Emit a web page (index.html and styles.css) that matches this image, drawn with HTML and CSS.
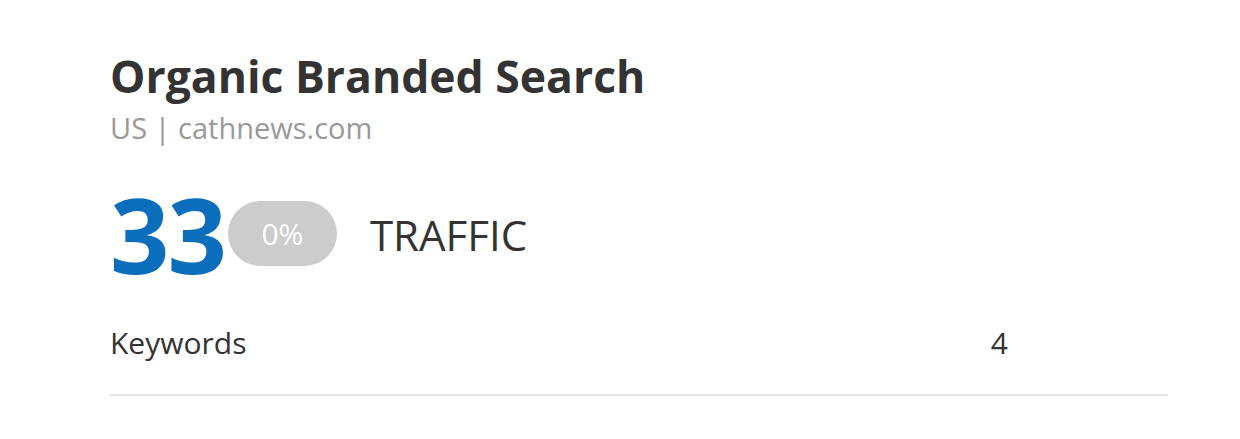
FILE: index.html
```html
<!DOCTYPE html>
<html lang="en">
<head>
  <meta charset="UTF-8" />
  <title>Organic Branded Search</title>
  <link rel="stylesheet" href="styles.css">
</head>
<body>
  <div class="widget">
    <h1 class="widget-title">Organic Branded Search</h1>
    <div class="widget-sub">US | cathnews.com</div>

    <div class="metric">
      <span class="metric-value">33</span>
      <span class="metric-badge">0%</span>
      <span class="metric-label">TRAFFIC</span>
    </div>

    <div class="stat-row">
      <span class="stat-name">Keywords</span>
      <span class="stat-value">4</span>
    </div>
  </div>
</body>
</html>
```

FILE: styles.css
```css
/* Reset */
* {
  box-sizing: border-box;
  margin: 0;
  padding: 0;
}

body {
  background-color: #fff;
  color: #333;
  font-family: 'Open Sans', 'Noto Sans', sans-serif;
}

.widget {
  padding: 48px 72px 0 110px;
}

.widget-title {
  font-size: 44.5px;
  font-weight: 700;
  color: #333;
  line-height: 56px;
}

.widget-sub {
  font-size: 29px;
  color: #999;
  line-height: 36px;
  margin-top: 6px;
}

/* Main metric */
.metric {
  display: flex;
  align-items: center;
  margin-top: 38px;
  height: 100px;
}

.metric-value {
  font-size: 104px;
  font-weight: 700;
  color: #0a6ebd;
  letter-spacing: -2px;
  line-height: 1;
}

.metric-badge {
  background-color: #ccc;
  color: #fff;
  font-size: 30px;
  width: 109px;
  height: 65px;
  border-radius: 33px;
  display: flex;
  align-items: center;
  justify-content: center;
  margin-left: 3px;
  margin-top: -2px;
}

.metric-label {
  font-size: 42px;
  color: #333;
  margin-left: 33px;
}

/* Rows */
.stat-row {
  display: flex;
  justify-content: space-between;
  align-items: center;
  font-size: 30px;
  line-height: 38px;
  color: #333;
  padding: 40px 160px 32px 0;
  border-bottom: 2px solid #e6e6e6;
}
```
